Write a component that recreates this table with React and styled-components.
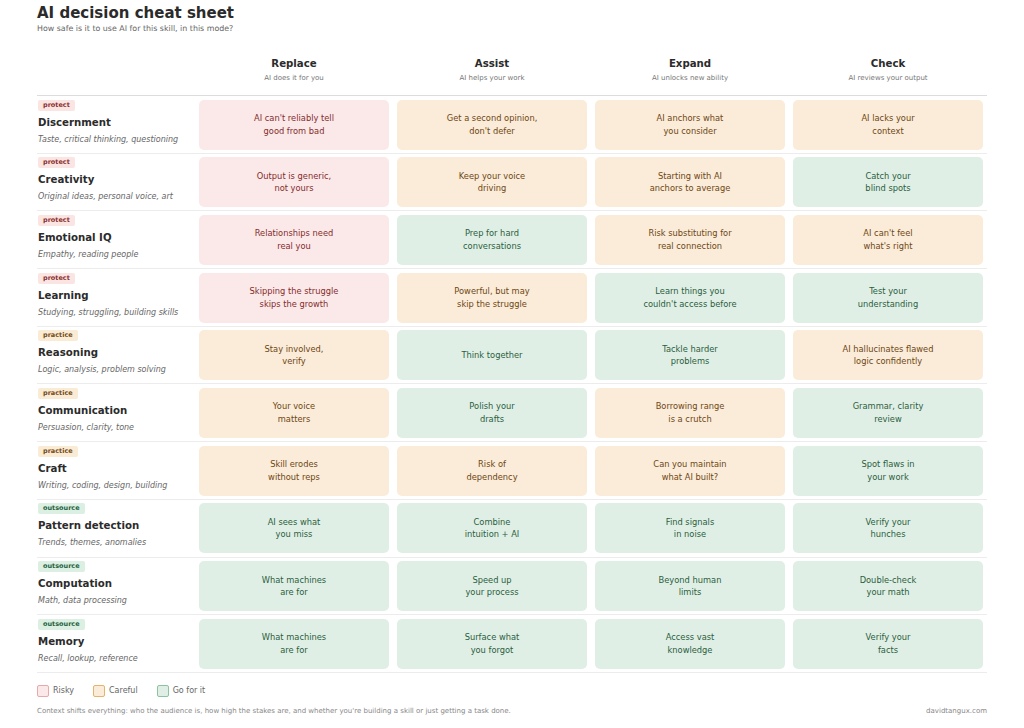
import React from "react";
import styled, { createGlobalStyle } from "styled-components";

const GlobalStyle = createGlobalStyle`
  html, body {
    margin: 0;
    padding: 0;
    background: #ffffff;
  }
  body {
    font-family: "DejaVu Sans", "Liberation Sans", sans-serif;
    color: #2b2b2b;
  }
`;

const tones = {
  risky: { bg: "#fbe9e9", fg: "#842c2c", border: "#e8a9ac" },
  careful: { bg: "#faecd9", fg: "#6e4614", border: "#e6b36a" },
  go: { bg: "#e0efe5", fg: "#2a5e3d", border: "#8fc3a0" },
};

const badges = {
  protect: { bg: "#fbe5e2", fg: "#8a2f2f" },
  practice: { bg: "#faebd5", fg: "#744a16" },
  outsource: { bg: "#dcefe3", fg: "#25613d" },
};

const modes = [
  { title: "Replace", sub: "AI does it for you" },
  { title: "Assist", sub: "AI helps your work" },
  { title: "Expand", sub: "AI unlocks new ability" },
  { title: "Check", sub: "AI reviews your output" },
];

// r = risky, c = careful, g = go for it
const skills = [
  {
    badge: "protect",
    name: "Discernment",
    desc: "Taste, critical thinking, questioning",
    cells: [
      ["r", "AI can't reliably tell", "good from bad"],
      ["c", "Get a second opinion,", "don't defer"],
      ["c", "AI anchors what", "you consider"],
      ["c", "AI lacks your", "context"],
    ],
  },
  {
    badge: "protect",
    name: "Creativity",
    desc: "Original ideas, personal voice, art",
    cells: [
      ["r", "Output is generic,", "not yours"],
      ["c", "Keep your voice", "driving"],
      ["c", "Starting with AI", "anchors to average"],
      ["g", "Catch your", "blind spots"],
    ],
  },
  {
    badge: "protect",
    name: "Emotional IQ",
    desc: "Empathy, reading people",
    cells: [
      ["r", "Relationships need", "real you"],
      ["g", "Prep for hard", "conversations"],
      ["c", "Risk substituting for", "real connection"],
      ["c", "AI can't feel", "what's right"],
    ],
  },
  {
    badge: "protect",
    name: "Learning",
    desc: "Studying, struggling, building skills",
    cells: [
      ["r", "Skipping the struggle", "skips the growth"],
      ["c", "Powerful, but may", "skip the struggle"],
      ["g", "Learn things you", "couldn't access before"],
      ["g", "Test your", "understanding"],
    ],
  },
  {
    badge: "practice",
    name: "Reasoning",
    desc: "Logic, analysis, problem solving",
    cells: [
      ["c", "Stay involved,", "verify"],
      ["g", "Think together"],
      ["g", "Tackle harder", "problems"],
      ["c", "AI hallucinates flawed", "logic confidently"],
    ],
  },
  {
    badge: "practice",
    name: "Communication",
    desc: "Persuasion, clarity, tone",
    cells: [
      ["c", "Your voice", "matters"],
      ["g", "Polish your", "drafts"],
      ["c", "Borrowing range", "is a crutch"],
      ["g", "Grammar, clarity", "review"],
    ],
  },
  {
    badge: "practice",
    name: "Craft",
    desc: "Writing, coding, design, building",
    cells: [
      ["c", "Skill erodes", "without reps"],
      ["c", "Risk of", "dependency"],
      ["c", "Can you maintain", "what AI built?"],
      ["g", "Spot flaws in", "your work"],
    ],
  },
  {
    badge: "outsource",
    name: "Pattern detection",
    desc: "Trends, themes, anomalies",
    cells: [
      ["g", "AI sees what", "you miss"],
      ["g", "Combine", "intuition + AI"],
      ["g", "Find signals", "in noise"],
      ["g", "Verify your", "hunches"],
    ],
  },
  {
    badge: "outsource",
    name: "Computation",
    desc: "Math, data processing",
    cells: [
      ["g", "What machines", "are for"],
      ["g", "Speed up", "your process"],
      ["g", "Beyond human", "limits"],
      ["g", "Double-check", "your math"],
    ],
  },
  {
    badge: "outsource",
    name: "Memory",
    desc: "Recall, lookup, reference",
    cells: [
      ["g", "What machines", "are for"],
      ["g", "Surface what", "you forgot"],
      ["g", "Access vast", "knowledge"],
      ["g", "Verify your", "facts"],
    ],
  },
];

const toneKey = { r: "risky", c: "careful", g: "go" };

export default function App() {
  return (
    <>
      <GlobalStyle />
      <Page>
        <Title>AI decision cheat sheet</Title>
        <Subtitle>How safe is it to use AI for this skill, in this mode?</Subtitle>

        <HeaderRow>
          <span />
          {modes.map((m) => (
            <ModeHead key={m.title}>
              <ModeTitle>{m.title}</ModeTitle>
              <ModeSub>{m.sub}</ModeSub>
            </ModeHead>
          ))}
        </HeaderRow>

        {skills.map((s) => (
          <Row key={s.name}>
            <Label>
              <Badge $kind={s.badge}>{s.badge}</Badge>
              <SkillName>{s.name}</SkillName>
              <SkillDesc>{s.desc}</SkillDesc>
            </Label>
            {s.cells.map(([t, ...lines], i) => (
              <Cell key={i} $tone={toneKey[t]}>
                {lines.map((l) => (
                  <span key={l}>{l}</span>
                ))}
              </Cell>
            ))}
          </Row>
        ))}

        <Legend>
          <LegendItem>
            <Swatch $tone="risky" />
            Risky
          </LegendItem>
          <LegendItem>
            <Swatch $tone="careful" />
            Careful
          </LegendItem>
          <LegendItem>
            <Swatch $tone="go" />
            Go for it
          </LegendItem>
        </Legend>

        <Footer>
          <span>
            Context shifts everything: who the audience is, how high the stakes are, and
            whether you're building a skill or just getting a task done.
          </span>
          <span>davidtangux.com</span>
        </Footer>
      </Page>
    </>
  );
}

const Page = styled.div`
  width: 950px;
  padding: 4px 37px 0;
`;

const Title = styled.h1`
  margin: 0;
  font-size: 15px;
  line-height: 18px;
  font-weight: 700;
  color: #2b2b2b;
`;

const Subtitle = styled.p`
  margin: 1px 0 0;
  font-size: 7.9px;
  line-height: 11px;
  color: #666;
`;

const gridCols = `
  display: grid;
  grid-template-columns: 154px repeat(4, 190px);
  column-gap: 8px;
  padding-right: 4px;
`;

const HeaderRow = styled.div`
  ${gridCols}
  padding-top: 23px;
  padding-bottom: 12px;
  border-bottom: 1px solid #dcdcdc;
`;

const ModeHead = styled.div`
  display: flex;
  flex-direction: column;
  align-items: center;
  gap: 3px;
`;

const ModeTitle = styled.div`
  font-size: 10.2px;
  line-height: 13px;
  font-weight: 700;
  color: #2b2b2b;
`;

const ModeSub = styled.div`
  font-size: 7px;
  line-height: 10px;
  color: #777;
`;

const Row = styled.div`
  ${gridCols}
  padding-top: 3.5px;
  padding-bottom: 3.2px;
  border-bottom: 1px solid #ececec;
`;

const Label = styled.div`
  display: flex;
  flex-direction: column;
  align-items: flex-start;
  padding-left: 1px;
`;

const Badge = styled.span`
  background: ${(p) => badges[p.$kind].bg};
  color: ${(p) => badges[p.$kind].fg};
  font-size: 6.5px;
  line-height: 11px;
  font-weight: 700;
  padding: 0 5px;
  border-radius: 2px;
`;

const SkillName = styled.div`
  margin-top: 5px;
  font-size: 10.2px;
  line-height: 13px;
  font-weight: 700;
  color: #2b2b2b;
`;

const SkillDesc = styled.div`
  margin-top: 5px;
  font-size: 8px;
  line-height: 11px;
  font-style: italic;
  color: #666;
`;

const Cell = styled.div`
  height: 50px;
  border-radius: 5px;
  background: ${(p) => tones[p.$tone].bg};
  color: ${(p) => tones[p.$tone].fg};
  display: flex;
  flex-direction: column;
  align-items: center;
  justify-content: center;
  text-align: center;
  font-size: 8.3px;
  line-height: 12.5px;
`;

const Legend = styled.div`
  display: flex;
  gap: 19px;
  margin-top: 12px;
`;

const LegendItem = styled.div`
  display: flex;
  align-items: center;
  gap: 4px;
  font-size: 8px;
  color: #666;
`;

const Swatch = styled.span`
  width: 10px;
  height: 10px;
  border-radius: 2px;
  background: ${(p) => tones[p.$tone].bg};
  border: 1px solid ${(p) => tones[p.$tone].border};
`;

const Footer = styled.div`
  display: flex;
  justify-content: space-between;
  margin-top: 9px;
  font-size: 7px;
  line-height: 10px;
  color: #888;
`;
